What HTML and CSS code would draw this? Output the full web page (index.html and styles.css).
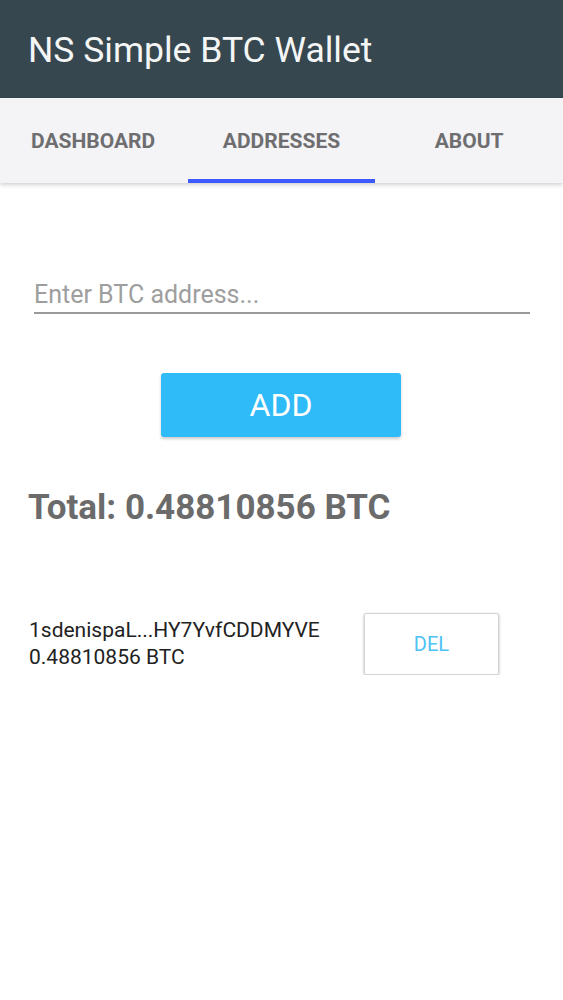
FILE: index.html
```html
<!DOCTYPE html>
<html>
<head>
<meta charset="utf-8">
<link rel="stylesheet" href="styles.css">
</head>
<body>
<header class="appbar">
  <h1 class="title">NS Simple BTC Wallet</h1>
</header>
<nav class="tabs">
  <div class="tab">DASHBOARD</div>
  <div class="tab active">ADDRESSES</div>
  <div class="tab">ABOUT</div>
</nav>
<main class="content">
  <div class="field">
    <input class="input" type="text" placeholder="Enter BTC address...">
  </div>
  <div class="add-wrap">
    <button class="add-btn">ADD</button>
  </div>
  <div class="total">Total: 0.48810856 BTC</div>
  <div class="row">
    <div class="addr">
      <div class="addr-line">1sdenispaL...HY7YvfCDDMYVE</div>
      <div class="addr-line">0.48810856 BTC</div>
    </div>
    <button class="del-btn">DEL</button>
  </div>
</main>
</body>
</html>
```
FILE: styles.css
```css
* { box-sizing: border-box; }
html, body {
  margin: 0;
  padding: 0;
  background: #ffffff;
  font-family: Roboto, "Liberation Sans", sans-serif;
}
.appbar {
  height: 98px;
  background: #37474f;
  display: flex;
  align-items: center;
  padding-left: 28px;
}
.title {
  margin: 0;
  font-size: 35.5px;
  line-height: 41px;
  font-weight: 400;
  color: #f4f6f6;
  padding-top: 3px;
}
.tabs {
  height: 85px;
  background: #f4f4f6;
  display: grid;
  grid-template-columns: 1fr 1fr 1fr;
  box-shadow: 0 2px 4px rgba(0,0,0,0.18);
  position: relative;
}
.tab {
  display: flex;
  align-items: center;
  justify-content: center;
  font-size: 21px;
  font-weight: 700;
  color: #6e6e70;
  padding-bottom: 0;
}
.tab:first-child { justify-content: flex-start; padding-left: 31px; }
.tab.active {
  border-bottom: 4px solid #3d5afe;
  padding-top: 4px;
}
.content {
  padding: 0;
}
.field {
  padding: 97px 33px 0 34px;
}
.input {
  display: block;
  width: 100%;
  border: none;
  border-bottom: 2px solid #9a9a9a;
  font-family: Roboto, "Liberation Sans", sans-serif;
  font-size: 25px;
  line-height: 29px;
  height: 34px;
  padding: 0 0 3px 0;
  background: transparent;
  outline: none;
  color: #333;
}
.input::placeholder { color: #9e9e9e; }
.add-wrap {
  display: flex;
  justify-content: center;
  padding-top: 59px;
}
.add-btn {
  width: 240px;
  height: 64px;
  background: #2fbaf8;
  color: #ffffff;
  border: none;
  border-radius: 3px;
  font-family: Roboto, "Liberation Sans", sans-serif;
  font-size: 32px;
  box-shadow: 0 2px 3px rgba(0,0,0,0.2);
  margin-left: -1px;
}
.total {
  margin-top: 50px;
  padding-left: 28px;
  font-size: 35px;
  line-height: 41px;
  font-weight: 700;
  color: #6b6b6b;
}
.row {
  display: flex;
  align-items: flex-start;
  margin-top: 85px;
  padding-left: 29px;
}
.addr {
  width: 335px;
  padding-top: 4px;
}
.addr-line {
  font-size: 21px;
  line-height: 27px;
  color: #222222;
}
.del-btn {
  width: 135px;
  height: 62px;
  background: #ffffff;
  border: 1px solid #d4d4d4;
  border-radius: 2px;
  box-shadow: 0 1px 3px rgba(0,0,0,0.28);
  color: #4cc2f5;
  font-family: Roboto, "Liberation Sans", sans-serif;
  font-size: 20px;
}
```
